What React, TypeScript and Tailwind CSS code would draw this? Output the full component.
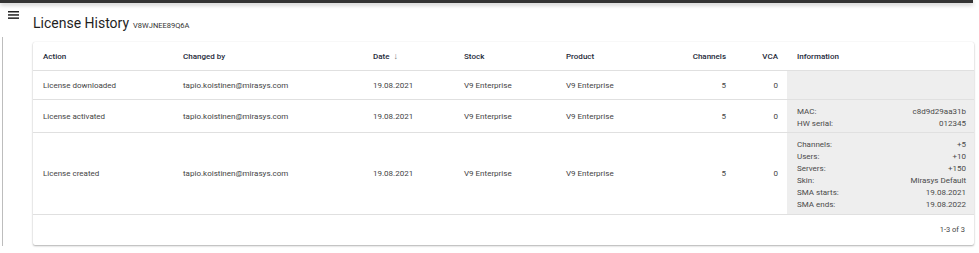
import React from "react";

const cols = "grid grid-cols-[140px_190px_91px_102px_100px_80px_51px_187px]";

type Row = {
  action: string;
  h: string;
  info: [string, string][];
};

const rows: Row[] = [
  { action: "License downloaded", h: "h-[29px]", info: [] },
  {
    action: "License activated",
    h: "h-[33px]",
    info: [
      ["MAC:", "c8d9d29aa31b"],
      ["HW serial:", "012345"],
    ],
  },
  {
    action: "License created",
    h: "h-[82px]",
    info: [
      ["Channels:", "+5"],
      ["Users:", "+10"],
      ["Servers:", "+150"],
      ["Skin:", "Mirasys Default"],
      ["SMA starts:", "19.08.2021"],
      ["SMA ends:", "19.08.2022"],
    ],
  },
];

const Cell = ({ children, right }: { children: React.ReactNode; right?: boolean }) => (
  <div className={`flex items-center pt-[1px] ${right ? "justify-end pr-[10px]" : "pl-[10px]"}`}>{children}</div>
);

export default function App() {
  return (
    <div className="w-[979px] h-[253px] bg-white overflow-hidden font-['Roboto',sans-serif] text-[#444]">
      <div className="w-[973px] h-[3px] bg-[#333] shadow-[0_2px_4px_rgba(0,0,0,0.25)]" />
      <div className="flex h-[250px]">
        <div className="w-[33px] flex flex-col">
          <svg className="ml-[8px] mt-[7.5px]" width="12" height="9" viewBox="0 0 12 9">
            <rect x="0" y="0" width="11" height="1.5" fill="#222" />
            <rect x="0" y="3.2" width="11" height="1.5" fill="#222" />
            <rect x="0" y="6.4" width="11" height="1.5" fill="#222" />
          </svg>
          <div className="ml-[2px] mt-[17px] w-px h-[209px] bg-[#bdbdbd]" />
        </div>
        <div className="w-[941px] flex flex-col">
          <div className="h-[39px] pt-[10px] flex items-baseline gap-[4px]">
            <span className="text-[14px] leading-[20px] text-[#1f1f1f]">License History</span>
            <span className="text-[7.5px] uppercase text-[#333]">V8WJNEE89Q6A</span>
          </div>
          <div className="h-[203px] rounded-[2px] bg-white shadow-[0_1px_2px_rgba(0,0,0,0.3),0_0_1px_rgba(0,0,0,0.12)] text-[8px]">
            <div className={`${cols} h-[29px] border-b border-[#e0e0e0] font-medium text-[#1e2a3a]`}>
              <Cell>Action</Cell>
              <Cell>Changed by</Cell>
              <Cell>
                Date <span className="ml-[4px] text-[#777] text-[9px]">↓</span>
              </Cell>
              <Cell>Stock</Cell>
              <Cell>Product</Cell>
              <Cell right>Channels</Cell>
              <div className="flex items-center justify-end pt-[1px] pr-[9px]">VCA</div>
              <Cell>Information</Cell>
            </div>
            {rows.map((r) => (
              <div key={r.action} className={`${cols} ${r.h} border-b border-[#e0e0e0]`}>
                <Cell>{r.action}</Cell>
                <Cell>tapio.koistinen@mirasys.com</Cell>
                <Cell>19.08.2021</Cell>
                <Cell>V9 Enterprise</Cell>
                <Cell>V9 Enterprise</Cell>
                <Cell right>5</Cell>
                <div className="flex items-center justify-end pt-[1px] pr-[9px]">0</div>
                <div className="bg-[#eeeeee] flex flex-col justify-center pt-[3px] pl-[10px] pr-[8px] text-[#4a4a4a]">
                  {r.info.map(([k, v]) => (
                    <div key={k} className="flex justify-between leading-[12px]">
                      <span>{k}</span>
                      <span>{v}</span>
                    </div>
                  ))}
                </div>
              </div>
            ))}
            <div className="h-[29px] flex items-center justify-end pt-[1px] pr-[9px] text-[7.5px] text-[#444]">1-3 of 3</div>
          </div>
        </div>
      </div>
    </div>
  );
}
